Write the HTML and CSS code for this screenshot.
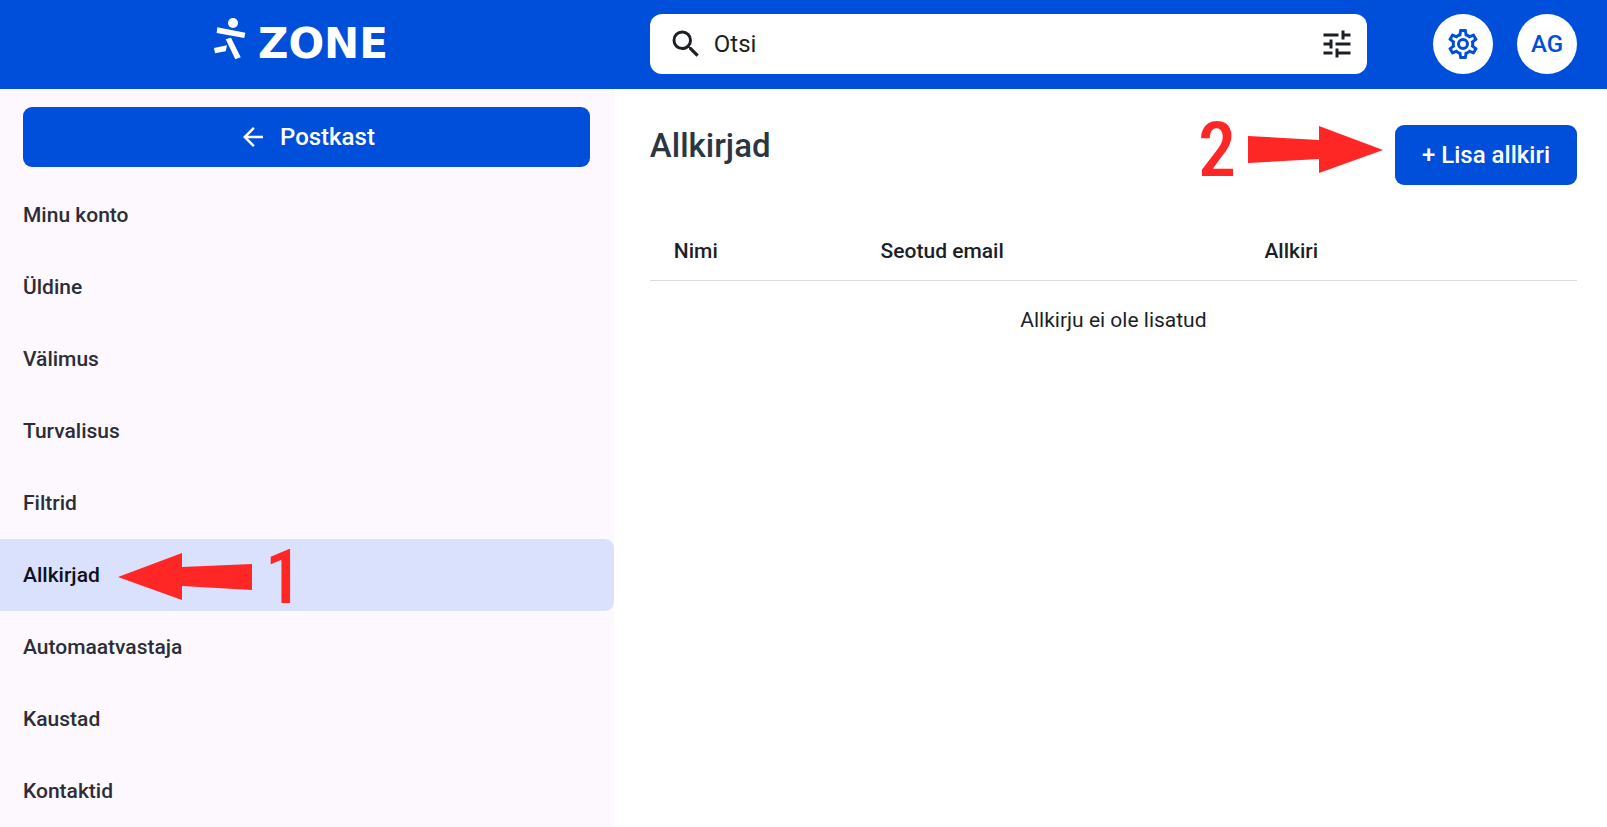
FILE: index.html
```
<!DOCTYPE html>
<html lang="et">
<head>
<meta charset="utf-8">
<meta name="viewport" content="width=device-width,initial-scale=1">
<title>Allkirjad · Zone</title>
<link rel="stylesheet" href="styles.css">
</head>
<body>

<header class="topbar">
  <a class="logo" href="#" aria-label="Zone">
    <svg width="32" height="42" viewBox="0 0 32 42" fill="currentColor">
      <circle cx="19" cy="5" r="5"/>
      <path d="M3.3 9.3 31.3 14.7 30.3 20 2.7 15zM11.7 21.3 17 19.7 26.7 39.3 21.3 41.3zM0 30 13 27.3 11.7 33.3 1 35.3z"/>
    </svg>
    <span>ZONE</span>
  </a>
  <div class="tools">
    <form class="search">
      <svg class="icon" viewBox="0 0 24 24"><path d="M15.5 14h-.79l-.28-.27A6.47 6.47 0 0 0 16 9.5 6.5 6.5 0 1 0 9.5 16c1.61 0 3.09-.59 4.23-1.57l.27.28v.79l5 4.99L20.49 19l-4.99-5zm-6 0C7.01 14 5 11.99 5 9.5S7.01 5 9.5 5 14 7.01 14 9.5 11.99 14 9.5 14z"/></svg>
      <input type="text" placeholder="Otsi" aria-label="Otsi">
      <button type="button" class="filter" aria-label="Otsingu valikud">
        <svg class="icon" viewBox="0 0 24 24"><path d="M3 17v2h6v-2H3zM3 5v2h10V5H3zm10 16v-2h8v-2h-8v-2h-2v6h2zM7 9v2H3v2h4v2h2V9H7zm14 4v-2H11v2h10zm-6-4h2V7h4V5h-4V3h-2v6z"/></svg>
      </button>
    </form>
    <div class="account">
      <button class="round" aria-label="Seaded">
        <svg class="icon" viewBox="0 0 24 24"><path d="M12,8A4,4 0 0,1 16,12A4,4 0 0,1 12,16A4,4 0 0,1 8,12A4,4 0 0,1 12,8M12,10A2,2 0 0,0 10,12A2,2 0 0,0 12,14A2,2 0 0,0 14,12A2,2 0 0,0 12,10M10,22C9.75,22 9.54,21.82 9.5,21.58L9.13,18.93C8.5,18.68 7.96,18.34 7.44,17.94L4.95,18.95C4.73,19.03 4.46,18.95 4.34,18.73L2.34,15.27C2.21,15.05 2.27,14.78 2.46,14.63L4.57,12.97L4.5,12L4.57,11L2.46,9.37C2.27,9.22 2.21,8.95 2.34,8.73L4.34,5.27C4.46,5.05 4.73,4.96 4.95,5.05L7.44,6.05C7.96,5.66 8.5,5.32 9.13,5.07L9.5,2.42C9.54,2.18 9.75,2 10,2H14C14.25,2 14.46,2.18 14.5,2.42L14.87,5.07C15.5,5.32 16.04,5.66 16.56,6.05L19.05,5.05C19.27,4.96 19.54,5.05 19.66,5.27L21.66,8.73C21.79,8.95 21.73,9.22 21.54,9.37L19.43,11L19.5,12L19.43,13L21.54,14.63C21.73,14.78 21.79,15.05 21.66,15.27L19.66,18.73C19.54,18.95 19.27,19.04 19.05,18.95L16.56,17.95C16.04,18.34 15.5,18.68 14.87,18.93L14.5,21.58C14.46,21.82 14.25,22 14,22H10M11.25,4L10.88,6.61C9.68,6.86 8.62,7.5 7.85,8.39L5.44,7.35L4.69,8.65L6.8,10.2C6.4,11.37 6.4,12.64 6.8,13.8L4.68,15.36L5.43,16.66L7.86,15.62C8.63,16.5 9.68,17.14 10.87,17.38L11.24,20H12.76L13.13,17.39C14.32,17.14 15.37,16.5 16.14,15.62L18.57,16.66L19.32,15.36L17.2,13.81C17.6,12.64 17.6,11.37 17.2,10.2L19.31,8.65L18.56,7.35L16.15,8.39C15.38,7.5 14.32,6.86 13.12,6.62L12.75,4H11.25Z"/></svg>
      </button>
      <button class="round">AG</button>
    </div>
  </div>
</header>

<div class="layout">
  <aside class="sidebar">
    <button class="btn back">
      <svg width="30" height="30" viewBox="0 0 24 24" fill="currentColor"><path d="M20 11H7.83l5.59-5.59L12 4l-8 8 8 8 1.41-1.41L7.83 13H20v-2z"/></svg>
      Postkast
    </button>
    <nav>
      <a href="#">Minu konto</a>
      <a href="#">Üldine</a>
      <a href="#">Välimus</a>
      <a href="#">Turvalisus</a>
      <a href="#">Filtrid</a>
      <a href="#" class="active">Allkirjad
        <span class="step">
          <svg width="135" height="48" viewBox="0 0 135 48"><path d="M0 24 64 0V14L134 11V37L64 33V47z"/></svg>
          <b>1</b>
        </span>
      </a>
      <a href="#">Automaatvastaja</a>
      <a href="#">Kaustad</a>
      <a href="#">Kontaktid</a>
    </nav>
  </aside>

  <main>
    <div class="page-head">
      <h1>Allkirjad</h1>
      <div class="actions">
        <span class="step">
          <b>2</b>
          <svg width="135" height="48" viewBox="0 0 135 48"><path d="M135 24 71 0V14L0 10V37L71 33V47z"/></svg>
        </span>
        <button class="btn">+ Lisa allkiri</button>
      </div>
    </div>

    <table>
      <thead>
        <tr><th class="name">Nimi</th><th class="email">Seotud email</th><th>Allkiri</th></tr>
      </thead>
      <tbody>
        <tr><td colspan="3">Allkirju ei ole lisatud</td></tr>
      </tbody>
    </table>
  </main>
</div>

</body>
</html>
```
FILE: styles.css
```
:root{
  --blue:#004fdb;
  --red:#ff2626;
  --side:#fdf8fd;
  --selected:#dae1fc;
  --text:#1c1f26;
  --side-width:38.2%;
}
*{box-sizing:border-box}
body{
  margin:0;min-height:100vh;display:flex;flex-direction:column;
  font:400 21px/24px Roboto,"Liberation Sans",sans-serif;
  color:var(--text);background:#fff;
}
a{color:inherit;text-decoration:none}
button,input{font:inherit;color:inherit;border:0;padding:0;background:none}
button{cursor:pointer}
svg{display:block;flex:none}
.icon{width:36px;height:36px;fill:currentColor}

/* top bar */
.topbar{display:flex;align-items:flex-start;height:89px;padding-top:14px;background:var(--blue)}
.logo{
  width:var(--side-width);padding-right:12px;
  display:flex;align-items:flex-start;justify-content:center;gap:12px;
  color:#fff;font:700 42px/60px "DejaVu Sans",sans-serif;
}
.logo svg{margin-top:4px}
.tools{flex:1;display:flex;align-items:center;gap:66px;padding:0 30px 0 36px}
.search{
  flex:1;min-width:0;height:60px;padding:0 12px 0 18px;
  display:flex;align-items:center;gap:10px;
  border-radius:12px;background:#fff;
}
.search input{flex:1;min-width:0;font-size:24px;line-height:36px;outline:none}
.search input::placeholder{color:var(--text);opacity:1}
.account{display:flex;gap:24px}
.round{
  width:60px;height:60px;border-radius:50%;
  display:flex;align-items:center;justify-content:center;
  background:#fff;color:var(--blue);font-size:24px;font-weight:500;
}

/* layout */
.layout{flex:1;display:flex}
.sidebar{width:var(--side-width);padding-top:18px;background:var(--side)}
main{flex:1;padding:36px 30px 36px 36px}

.btn{
  height:60px;padding:0 27px;border-radius:9px;
  background:var(--blue);color:#fff;font-size:24px;font-weight:500;
}
.back{
  width:calc(100% - 47px);margin:0 24px 12px 23px;
  display:flex;align-items:center;justify-content:center;gap:12px;
}

nav a{
  display:flex;align-items:center;height:72px;padding-left:23px;
  border-radius:0 9px 9px 0;font-weight:500;color:#2b2e38;
}
nav .active{background:var(--selected);color:#0d1020}

/* numbered pointers */
.step{display:flex;align-items:center;gap:12px;color:var(--red)}
.step svg{fill:currentColor}
.step b{font:500 76px/50px "Roboto Condensed",Roboto,sans-serif}
.active .step{margin-left:18px;padding-top:4px}

/* content */
.page-head{display:flex;justify-content:space-between;align-items:flex-start}
h1{margin:0;font-size:33px;line-height:42px;font-weight:500;color:#2b3642}
.actions{display:flex;align-items:flex-start;gap:12px}

table{width:100%;margin-top:36px;border-spacing:0;table-layout:fixed}
th{
  height:60px;padding:0 24px;text-align:left;font-weight:500;
  border-bottom:1px solid #dcdcdc;
}
.name{width:22.3%}
.email{width:41.4%}
td{height:78px;padding:0;text-align:center}
```
